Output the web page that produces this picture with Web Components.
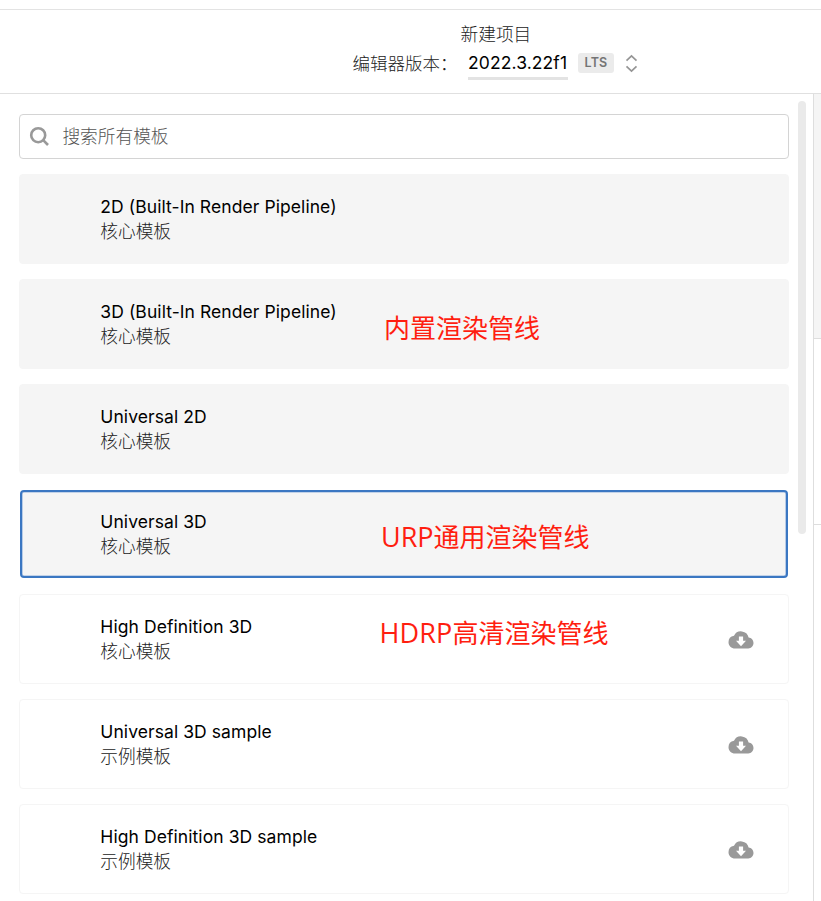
<!DOCTYPE html>
<html lang="zh-CN">
<head>
<meta charset="utf-8">
<title>新建项目</title>
<style>
html,body{margin:0;height:100%;overflow:hidden;background:#fff}
body{font-family:Inter,"Noto Sans CJK SC",sans-serif;font-size:17.5px;color:#000}
</style>
</head>
<body>
<project-window></project-window>
<script>
function define(name, html) {
  const template = document.createElement('template');
  template.innerHTML = html;
  customElements.define(name, class extends HTMLElement {
    constructor() {
      super();
      this.attachShadow({ mode: 'open' }).append(template.content.cloneNode(true));
    }
  });
}

define('version-bar', `
<style>
:host{display:block;box-sizing:border-box;height:85px;border-top:1px solid #e3e3e3;border-bottom:1px solid #e0e0e0;background:#fff}
.title{box-sizing:border-box;padding-left:460.5px;margin-top:11px;height:28px;line-height:28px;font-size:17.7px;font-weight:300;color:#222;white-space:nowrap}
.row{display:flex;align-items:flex-start;padding-left:352.5px;height:32px;white-space:nowrap}
.label{width:115.5px;line-height:30px;font-weight:300;color:#222}
.version{box-sizing:border-box;width:100px;height:31px;line-height:28px;border-bottom:3px solid #e3e3e3;letter-spacing:.1px}
.badge{width:36px;height:20px;margin:4px 0 0 10px;border-radius:3px;background:#ebebeb;color:#757575;font-size:12.5px;font-weight:600;line-height:20px;text-align:center;letter-spacing:.2px}
svg{margin:5px 0 0 11px;display:block}
</style>
<div class="title"><slot name="title"></slot></div>
<div class="row"><span class="label"><slot name="label"></slot></span><span class="version"><slot></slot></span><span class="badge"><slot name="badge"></slot></span>
<svg width="13" height="19" viewBox="0 0 13 19" fill="none" stroke="#959595" stroke-width="1.7"><path d="M1.5 6.7 6.5 1.9 11.5 6.7M1.5 12.3 6.5 17.1 11.5 12.3"/></svg></div>`);

define('search-field', `
<style>
:host{display:flex;align-items:center;box-sizing:border-box;height:45px;border:1px solid #d4d4d4;border-radius:4px;padding-left:9px;gap:12.4px;background:#fff;color:#555;font-size:17.7px;font-weight:300}
svg{display:block;flex:none}
span{line-height:28px}
</style>
<svg width="21" height="21" viewBox="0 0 21 21" fill="none" stroke="#999" stroke-width="2.6"><circle cx="9.2" cy="9.2" r="7"/><path d="M14.2 14.2 19 19"/></svg><span><slot></slot></span>`);

define('template-card', `
<style>
:host{display:flex;position:relative;box-sizing:border-box;height:90px;border:1px solid #f5f5f5;border-radius:4px;padding:19px 34.5px 0 80.3px;white-space:nowrap;background:#fff}
:host([installed]){background:#f5f5f5}
:host([selected]){margin:1px;height:88px;border:2px solid #3b77c2;box-shadow:inset 0 0 0 .6px #8fb0dc;padding:17px 33px 0 78.3px}
.text{flex:1}
.name{height:26px;line-height:26px;letter-spacing:.08px}
.kind{height:24px;line-height:24px;font-size:17.7px;font-weight:300;color:#222}
svg{display:none;width:26px;height:18px;margin-top:16.5px}
:host([download]) svg{display:block}
</style>
<div class="text"><div class="name"><slot></slot></div><div class="kind"><slot name="kind"></slot></div></div>
<svg viewBox="0 0 26 18"><path fill="#999" fill-rule="evenodd" d="M20.6 6.5A7.8 7.8 0 0 0 6 4.7 6.6 6.6 0 0 0 .5 11.2C.5 14.9 3.4 17.5 7 17.5H20.3C23.2 17.5 25.5 15.1 25.5 12.1S23.4 6.7 20.6 6.5ZM10.9 5.6V9.8H8L13 15.3 18 9.8H15.1V5.6Z"/></svg>
<slot name="note"></slot>`);

define('red-note', `
<style>
:host{position:absolute;left:var(--x);top:var(--y);font:400 26px/38px "Noto Sans CJK SC",sans-serif;color:#ff1e10;white-space:nowrap}
.latin{font:400 27px/38px "Open Sans","Noto Sans",sans-serif;letter-spacing:var(--latin-spacing,0)}
</style><span class="latin"><slot name="latin"></slot></span><slot></slot>`);

define('scroll-thumb', `
<style>:host{display:block;width:8px;height:433px;border-radius:4px;background:#eaeaea}</style>`);

define('side-strip', `
<style>
:host{display:flex;flex-direction:column;border-left:1px solid #dedede;background:#fff}
.a{height:244px;background:#f5f5f5;border-bottom:1px solid #dedede}
.b{height:185px;border-bottom:1px solid #dedede}
</style><div class="a"></div><div class="b"></div>`);

define('project-window', `
<style>
:host{display:block;box-sizing:border-box;height:901px;padding-top:9px;overflow:hidden;background:#fff}
.body{display:grid;grid-template-columns:789px 9px 8px 7px 1fr;height:807px}
.list{display:flex;flex-direction:column;gap:15px;padding:20px 0 0 19px}
scroll-thumb{grid-column:3;margin-top:7px}
side-strip{grid-column:5}
</style>
<version-bar><span slot="title">新建项目</span><span slot="label">编辑器版本：</span>2022.3.22f1<span slot="badge">LTS</span></version-bar>
<div class="body">
<div class="list">
<search-field>搜索所有模板</search-field>
<template-card installed>2D (Built-In Render Pipeline)<span slot="kind">核心模板</span></template-card>
<template-card installed>3D (Built-In Render Pipeline)<span slot="kind">核心模板</span><red-note slot="note" style="--x:364px;--y:28px">内置渲染管线</red-note></template-card>
<template-card installed>Universal 2D<span slot="kind">核心模板</span></template-card>
<template-card installed selected>Universal 3D<span slot="kind">核心模板</span><red-note slot="note" style="--x:359px;--y:25px"><span slot="latin">URP</span>通用渲染管线</red-note></template-card>
<template-card download>High Definition 3D<span slot="kind">核心模板</span><red-note slot="note" style="--x:359.5px;--y:18px;--latin-spacing:.15px"><span slot="latin">HDRP</span>高清渲染管线</red-note></template-card>
<template-card download>Universal 3D sample<span slot="kind">示例模板</span></template-card>
<template-card download>High Definition 3D sample<span slot="kind">示例模板</span></template-card>
</div>
<scroll-thumb></scroll-thumb>
<side-strip></side-strip>
</div>`);
</script>
</body>
</html>
